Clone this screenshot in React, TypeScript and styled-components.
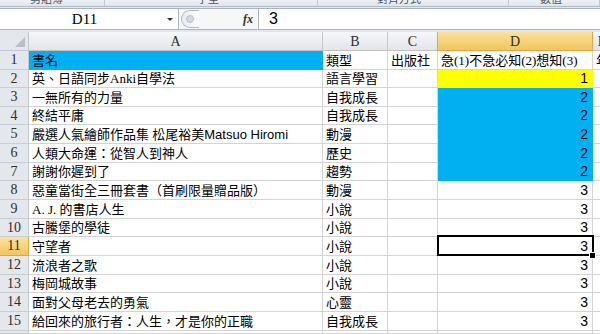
import React from 'react';
import styled, { createGlobalStyle, css } from 'styled-components';

const Global = createGlobalStyle`
  html, body { margin: 0; padding: 0; background: #fff; }
  body { width: 600px; height: 334px; overflow: hidden; }
`;

const Window = styled.div`
  width: 600px;
  height: 334px;
  overflow: hidden;
  display: flex;
  flex-direction: column;
  background: #fff;
  font-family: "Liberation Serif", "Noto Sans CJK TC", serif;
`;

const RibbonStrip = styled.div`
  height: 6px;
  flex: none;
  display: flex;
  overflow: hidden;
  background: linear-gradient(#eef2f7, #dfe5ec);
  border-bottom: 1px solid #b4bcc7;
`;

const RibbonGroup = styled.div<{ $w?: number; $pad: number }>`
  ${p => (p.$w ? css`width: ${p.$w}px; flex: none;` : css`flex: 1;`)}
  box-sizing: border-box;
  padding-left: ${p => p.$pad}px;
  border-right: 1px solid #c3cad4;
  display: flex;
  align-items: flex-start;
`;

const GroupLabel = styled.span`
  font-family: "Noto Sans CJK TC", sans-serif;
  font-size: 11px;
  line-height: 11px;
  margin-top: -7px;
  color: #4a5260;
  white-space: nowrap;
`;

const FormulaBar = styled.div`
  height: 25px;
  flex: none;
  box-sizing: border-box;
  padding: 1px 0 2px;
  display: flex;
  background: #e3e7ed;
`;

const NameBox = styled.div`
  width: 179px;
  flex: none;
  box-sizing: border-box;
  display: flex;
  align-items: center;
  background: #fff;
  border: 1px solid #aab3bf;
  border-left: none;
`;

const NameText = styled.span`
  flex: 1;
  text-align: center;
  font-size: 15px;
  color: #000;
  padding-left: 2px;
`;

const DropArrow = styled.span`
  width: 0;
  height: 0;
  margin-right: 5px;
  border-left: 3px solid transparent;
  border-right: 3px solid transparent;
  border-top: 3px solid #333;
`;

const FxArea = styled.div`
  width: 79px;
  flex: none;
  box-sizing: border-box;
  display: flex;
  align-items: center;
  justify-content: space-between;
  padding: 0 5px 0 2px;
  background: #f6f7f9;
  border-top: 1px solid #aab3bf;
  border-bottom: 1px solid #aab3bf;
`;

const Handle = styled.span`
  width: 18px;
  height: 18px;
  box-sizing: border-box;
  border: 1px solid #b1b8c2;
  border-right: none;
  border-radius: 10px 0 0 10px;
  background: linear-gradient(90deg, #e9ecf0, #fafbfc);
  display: flex;
  align-items: center;
  padding-left: 4px;
`;

const HandleDot = styled.span`
  width: 6px;
  height: 6px;
  border-radius: 50%;
  background: #d5d9df;
  border: 1px solid #b8bec7;
`;

const Fx = styled.span`
  font-family: "Liberation Serif", serif;
  font-style: italic;
  font-weight: bold;
  font-size: 12px;
  color: #333;
`;

const FormulaInput = styled.div`
  flex: 1;
  box-sizing: border-box;
  display: flex;
  align-items: center;
  padding-left: 10px;
  background: #fff;
  border: 1px solid #aab3bf;
  border-right: none;
  font-family: "Liberation Sans", sans-serif;
  font-size: 16px;
  color: #000;
`;

const Sheet = styled.div`
  flex: 1;
  display: grid;
  grid-template-columns: 29px 294px 65px 50px 155px 1fr;
  grid-template-rows: 19px 19px 18px 19px 18px 19px 19px 18px 19px 19px 18px 19px 19px 18px 19px 19px 1fr;
  overflow: hidden;
`;

const headerBase = css`
  box-sizing: border-box;
  display: flex;
  align-items: center;
  justify-content: center;
  color: #2f2f2f;
  font-family: "Liberation Serif", serif;
  overflow: hidden;
`;

const Corner = styled.div`
  ${headerBase};
  justify-content: flex-end;
  align-items: flex-end;
  padding: 0 3px 3px 0;
  background: #e4e7eb;
  border-right: 1px solid #c3c8cf;
  border-bottom: 1px solid #c3c8cf;
`;

const ColHeader = styled.div<{ $active?: boolean }>`
  ${headerBase};
  font-size: 14px;
  padding-top: 1px;
  background: ${p => (p.$active ? 'linear-gradient(#fbe29a, #f2c55f)' : 'linear-gradient(#f6f7f9, #e2e5e9)')};
  border-right: 1px solid ${p => (p.$active ? '#e2a64a' : '#c3c8cf')};
  border-bottom: 1px solid ${p => (p.$active ? '#e2a64a' : '#c6c1bd')};
  ${p => p.$active && css`border-left: 1px solid #e2a64a; margin-left: -1px;`}
`;

const RowHeader = styled.div<{ $active?: boolean }>`
  ${headerBase};
  font-size: 14px;
  background: ${p => (p.$active ? 'linear-gradient(#fbe29a, #f2c55f)' : '#e4e7ec')};
  border-right: 1px solid ${p => (p.$active ? '#e2a64a' : '#c3c8cf')};
  border-bottom: 1px solid ${p => (p.$active ? '#e2a64a' : '#c8cdd4')};
`;

const Cell = styled.div<{ $fill?: string; $num?: boolean; $selected?: boolean }>`
  box-sizing: border-box;
  position: relative;
  display: flex;
  align-items: flex-end;
  justify-content: ${p => (p.$num ? 'flex-end' : 'flex-start')};
  padding: 0 ${p => (p.$num ? '4px' : '2px')} 0 3px;
  background: ${p => p.$fill ?? '#fff'};
  border-right: 1px solid ${p => p.$fill ?? '#d4d4d4'};
  border-bottom: 1px solid ${p => p.$fill ?? '#d4d4d4'};
  white-space: nowrap;
  color: #000;
  font-size: ${p => (p.$num ? '14px' : '13px')};
  line-height: 17px;
  font-family: ${p => (p.$num ? '"Liberation Sans", sans-serif' : '"Liberation Serif", "Noto Sans CJK TC", serif')};
  ${p =>
    p.$selected &&
    css`
      z-index: 2;
      &::after {
        content: '';
        position: absolute;
        left: -1px;
        top: -2px;
        right: -2px;
        bottom: -1px;
        border: 2px solid #000;
        pointer-events: none;
      }
      &::before {
        content: '';
        position: absolute;
        right: -4px;
        bottom: -4px;
        width: 5px;
        height: 5px;
        background: #000;
        border: 1px solid #fff;
        z-index: 3;
      }
    `}
`;

const Latin = styled.span`
  font-family: "Liberation Sans", sans-serif;
`;

const CYAN = '#00b0f0';
const YELLOW = '#ffff00';

type Row = { a: React.ReactNode; b: string; c: string; d: string; e?: string; aFill?: string; dFill?: string };

const rows: Row[] = [
  { a: '書名', b: '類型', c: '出版社', d: '急(1)不急必知(2)想知(3)', e: '年', aFill: CYAN },
  { a: '英、日語同步Anki自學法', b: '語言學習', c: '', d: '1', dFill: YELLOW },
  { a: '一無所有的力量', b: '自我成長', c: '', d: '2', dFill: CYAN },
  { a: '終結平庸', b: '自我成長', c: '', d: '2', dFill: CYAN },
  { a: <>嚴選人氣繪師作品集 松尾裕美<Latin>Matsuo Hiromi</Latin></>, b: '動漫', c: '', d: '2', dFill: CYAN },
  { a: '人類大命運：從智人到神人', b: '歷史', c: '', d: '2', dFill: CYAN },
  { a: '謝謝你遲到了', b: '趨勢', c: '', d: '2', dFill: CYAN },
  { a: '惡童當街全三冊套書（首刷限量贈品版）', b: '動漫', c: '', d: '3' },
  { a: 'A. J. 的書店人生', b: '小說', c: '', d: '3' },
  { a: '古騰堡的學徒', b: '小說', c: '', d: '3' },
  { a: '守望者', b: '小說', c: '', d: '3' },
  { a: '流浪者之歌', b: '小說', c: '', d: '3' },
  { a: '梅岡城故事', b: '小說', c: '', d: '3' },
  { a: '面對父母老去的勇氣', b: '心靈', c: '', d: '3' },
  { a: '給回來的旅行者：人生，才是你的正職', b: '自我成長', c: '', d: '3' },
  { a: '', b: '', c: '', d: '' },
];

const SELECTED_ROW = 11;
const VISIBLE_LABEL_ROWS = 15;

export default function App() {
  return (
    <Window>
      <Global />
      <RibbonStrip>
        <RibbonGroup $w={105} $pad={30}><GroupLabel>剪貼簿</GroupLabel></RibbonGroup>
        <RibbonGroup $w={213} $pad={92}><GroupLabel>字型</GroupLabel></RibbonGroup>
        <RibbonGroup $w={191} $pad={59}><GroupLabel>對齊方式</GroupLabel></RibbonGroup>
        <RibbonGroup $pad={31}><GroupLabel>數值</GroupLabel></RibbonGroup>
      </RibbonStrip>
      <FormulaBar>
        <NameBox>
          <NameText>D11</NameText>
          <DropArrow />
        </NameBox>
        <FxArea>
          <Handle><HandleDot /></Handle>
          <Fx>fx</Fx>
        </FxArea>
        <FormulaInput>3</FormulaInput>
      </FormulaBar>
      <Sheet>
        <Corner>
          <svg width="10" height="10" viewBox="0 0 10 10">
            <polygon points="10,0 10,10 0,10" fill="#b9bfc7" />
          </svg>
        </Corner>
        <ColHeader>A</ColHeader>
        <ColHeader>B</ColHeader>
        <ColHeader>C</ColHeader>
        <ColHeader $active>D</ColHeader>
        <ColHeader>E</ColHeader>
        {rows.map((r, i) => {
          const n = i + 1;
          return (
            <React.Fragment key={n}>
              <RowHeader $active={n === SELECTED_ROW}>{n <= VISIBLE_LABEL_ROWS ? n : ''}</RowHeader>
              <Cell $fill={r.aFill}>{r.a}</Cell>
              <Cell>{r.b}</Cell>
              <Cell>{r.c}</Cell>
              <Cell $fill={r.dFill} $num={n > 1} $selected={n === SELECTED_ROW}>{r.d}</Cell>
              <Cell>{r.e ?? ''}</Cell>
            </React.Fragment>
          );
        })}
      </Sheet>
    </Window>
  );
}
